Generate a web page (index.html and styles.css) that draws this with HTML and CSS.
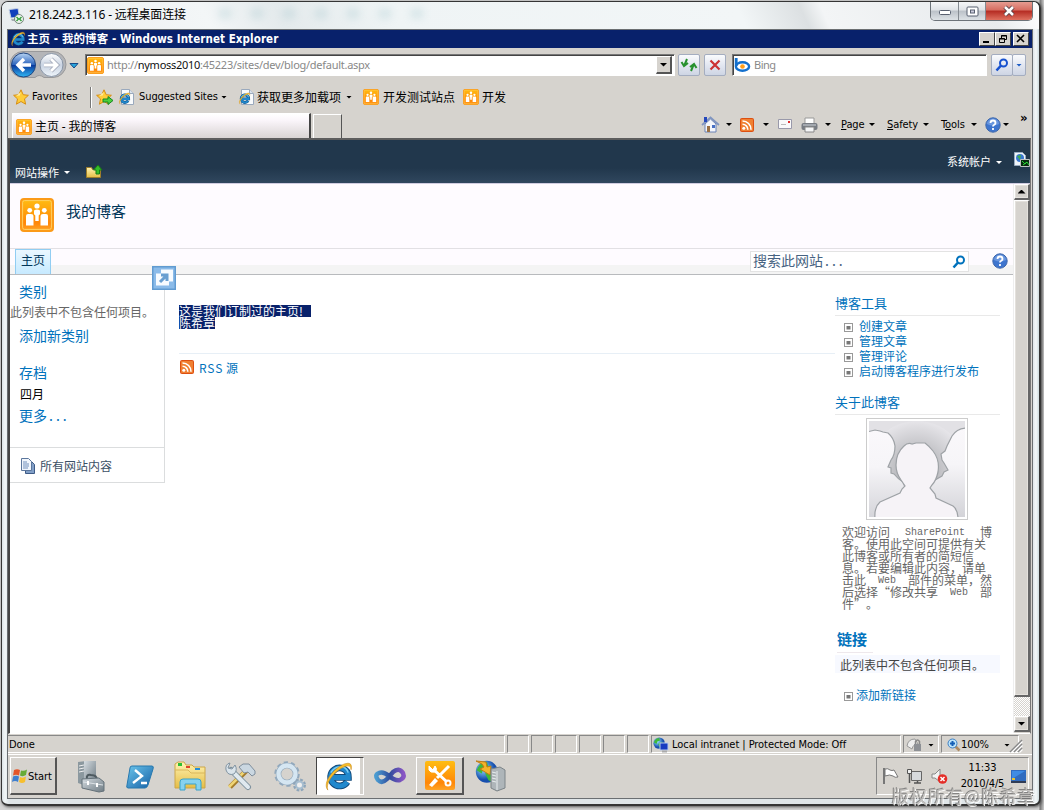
FILE: index.html
```html
<!DOCTYPE html>
<html lang="zh-CN">
<head>
<meta charset="utf-8">
<title>主页 - 我的博客</title>
<link rel="stylesheet" href="styles.css">
</head>
<body>
<svg class="defs" width="0" height="0">
  <defs>
    <linearGradient id="gOrange" x1="0" y1="0" x2="0" y2="1"><stop offset="0" stop-color="#ffbd12"/><stop offset=".75" stop-color="#ff8708"/><stop offset="1" stop-color="#ffa526"/></linearGradient>
    <linearGradient id="gBlue" x1="0" y1="0" x2="0" y2="1"><stop offset="0" stop-color="#b8d5f4"/><stop offset=".48" stop-color="#2f66bd"/><stop offset=".52" stop-color="#0a3a9e"/><stop offset="1" stop-color="#30b8f5"/></linearGradient>
    <linearGradient id="gSilver" x1="0" y1="0" x2="0" y2="1"><stop offset="0" stop-color="#fff"/><stop offset=".5" stop-color="#c9d3e2"/><stop offset="1" stop-color="#eff5fb"/></linearGradient>
    <linearGradient id="gFolder" x1="0" y1="0" x2="0" y2="1"><stop offset="0" stop-color="#fff3b4"/><stop offset="1" stop-color="#e5bd45"/></linearGradient>
    <linearGradient id="gPs" x1="0" y1="0" x2="1" y2="1"><stop offset="0" stop-color="#6cc6ec"/><stop offset="1" stop-color="#145fa5"/></linearGradient>
    <linearGradient id="gVs" x1="0" y1="0" x2="1" y2="0"><stop offset="0" stop-color="#4a9bd0"/><stop offset=".5" stop-color="#304c9d"/><stop offset="1" stop-color="#8a56c4"/></linearGradient>
    <linearGradient id="gSteel" x1="0" y1="0" x2="1" y2="1"><stop offset="0" stop-color="#d5dce1"/><stop offset="1" stop-color="#6e7b83"/></linearGradient>
    <radialGradient id="gPhoto"><stop offset="0" stop-color="#999ba0"/><stop offset=".5" stop-color="#c4c4c8"/><stop offset="1" stop-color="#e6e5e9"/></radialGradient>
    <linearGradient id="gSide" x1="0" y1="0" x2="0" y2="1"><stop offset="0" stop-color="#faf8fb"/><stop offset=".4" stop-color="#f6f5f8"/><stop offset="1" stop-color="#d2d2d7"/></linearGradient>
    <radialGradient id="gGlobe" cx=".35" cy=".35"><stop offset="0" stop-color="#9be6ff"/><stop offset="1" stop-color="#174fae"/></radialGradient>
    <symbol id="moss" viewBox="0 0 34 34"><rect x="1" y="1" width="32" height="32" rx="3" fill="url(#gOrange)" stroke="#fb9a18" stroke-width="2"/><rect x="2.600" y="2.600" width="28.800" height="28.800" rx="2" fill="none" stroke="#ffd063"/><g fill="#fff"><circle cx="17" cy="8" r="2.600"/><circle cx="9.700" cy="12.300" r="2.400"/><circle cx="24.300" cy="12.300" r="2.400"/><path d="M14 12.500q3-2 6 0v4q-1 0-1.300 1v5.500h-3.400v-5.500q-.3-1-1.300-1zM6 18q0-2 2-2h3q2.500 0 2.500 2v9.500H6zM20.500 18q0-2 2.500-2h3q2 0 2 2v9.500h-7.500z"/></g></symbol>
    <symbol id="ie" viewBox="0 0 32 32"><path d="M25 21.500a9.300 9.300 0 1 1 .6-9q.6 1.600.6 4.500H10.500" fill="none" stroke="#124878" stroke-width="7"/><path d="M25 21.500a9.300 9.300 0 1 1 .6-9q.6 1.600.6 4.500H10.500" fill="none" stroke="#2088cd" stroke-width="5"/><path d="M8 12q4-6 10-6t8 6" fill="none" stroke="#7fd0f5" stroke-width="1.500"/><path d="M5 30C-1 23 10 8 22 3q9-3 7 6 0-6-7-3C12 10 2 23 5 30z" fill="#f7bd28" stroke="#c8891a" stroke-width=".6"/></symbol>
    <symbol id="iepage" viewBox="0 0 16 16"><path d="M3.500.5h8l4 4v11h-12z" fill="#f9fbfd" stroke="#9aa9bd"/><path d="M11.500.5v4h4" fill="#dbe4ee" stroke="#9aa9bd"/><use href="#ie" x="0" y="3" width="13" height="13"/></symbol>
    <symbol id="star" viewBox="0 0 16 16"><path d="M8 .8l2.200 4.900 5.200.6-3.900 3.600 1.100 5.300L8 12.500l-4.600 2.700 1.100-5.300L.6 6.300l5.200-.6z" fill="#ffcd38" stroke="#d78e13"/><path d="M8 3L6.600 6.600 3 7z" fill="#fff0a0"/></symbol>
    <symbol id="rss" viewBox="0 0 14 14"><rect width="14" height="14" rx="2" fill="#dd4f10"/><rect x="1" y="1" width="12" height="12" rx="1" fill="#f08032"/><circle cx="3.800" cy="10.300" r="1.500" fill="#fff"/><path d="M2.500 6.200a5.300 5.300 0 0 1 5.300 5.500M2.500 3a8.500 8.500 0 0 1 8.500 8.700" fill="none" stroke="#fff" stroke-width="1.600"/></symbol>
    <symbol id="help" viewBox="0 0 16 16"><circle cx="8" cy="8" r="7.200" fill="#3e75ce" stroke="#3f68ab"/><path d="M2 7a6 5.500 0 0 1 12 0q-6 3-12 0z" fill="#87acea" opacity=".6"/><path d="M5.500 6q0-2.500 2.500-2.500T10.500 6q0 1-1.300 1.700Q8 8.300 8 9.500M8 11v2" fill="none" stroke="#fff" stroke-width="1.800"/></symbol>
    <symbol id="mag" viewBox="0 0 14 14"><circle cx="8.500" cy="5" r="3.500" fill="none" stroke="currentColor" stroke-width="2"/><path d="M6 7.500L1.500 12.500" stroke="currentColor" stroke-width="2.600"/></symbol>
    <symbol id="globe" viewBox="0 0 16 16"><circle cx="7" cy="7" r="6.500" fill="url(#gGlobe)"/><path d="M1 6q2-5 6-5l1 3-3 1-1 3zM6 8l4-2 3 2-3 5-2-1z" fill="#3eb93a"/></symbol>
    <symbol id="bullet" viewBox="0 0 9 9"><rect x=".5" y=".5" width="8" height="8" fill="#fff" stroke="#999"/><path d="M2.500 3h4v3.500h-4z" fill="#777"/></symbol>
  </defs>
</svg>

<div class="frame">
  <header class="rdp-title">
    <svg class="rdp-icon" width="16" height="16" viewBox="0 0 16 16"><path d="M1 1.500l9-1 1.500 8.500-8.500 1z" fill="#123fbd" stroke="#c6d1e2"/><path d="M3 11h7l1 2H4z" fill="#a7adb5"/><circle cx="11" cy="11" r="4.500" fill="#edf3ee" stroke="#76877c"/><path d="M8.500 9l2 2-2 2M13.500 9l-2 2 2 2" fill="none" stroke="#2d9b35" stroke-width="1.300"/></svg>
    <span class="rdp-name">218.242.3.116 - 远程桌面连接</span>
    <div class="blur-marks"><i></i><i></i><i></i><i></i><i></i><i></i><i></i></div>
    <div class="aero-buttons">
      <span class="ab min"><svg width="14" height="9" viewBox="0 0 14 9"><rect x="1.500" y="3.500" width="11" height="4" rx="1" fill="#fff" stroke="#596070"/></svg></span>
      <span class="ab max"><svg width="13" height="11" viewBox="0 0 13 11"><rect x="1" y="1" width="11" height="9" rx="1" fill="#fff" stroke="#596070"/><rect x="4.500" y="4" width="4" height="3" fill="#ccd" stroke="#596070"/></svg></span>
      <span class="ab close"><svg width="14" height="12" viewBox="0 0 14 12"><path d="M3 2l8 8M11 2l-8 8" stroke="#5a4248" stroke-width="4.500"/><path d="M3 2l8 8M11 2l-8 8" stroke="#fff" stroke-width="2.500"/></svg></span>
    </div>
  </header>

  <main class="desktop">
    <div class="ie-title">
      <svg width="16" height="16"><use href="#ie"/></svg>
      <b class="ie-name">主页 - 我的博客 - <span>Windows Internet Explorer</span></b>
      <div class="win-buttons">
        <span class="wb"><svg width="12" height="10"><path d="M2 8h6" stroke="#000" stroke-width="2"/></svg></span>
        <span class="wb"><svg width="12" height="10"><path d="M4.500 4V1.500h5v4H8M4 2h6M2.500 4.500h5v4h-5zM2 5h6" fill="none" stroke="#000"/></svg></span>
        <span class="wb last"><svg width="12" height="10"><path d="M2 1l7 7M9 1L2 8" stroke="#000" stroke-width="1.600"/></svg></span>
      </div>
    </div>

    <div class="nav-row">
      <svg class="backfwd" width="59" height="30" viewBox="0 0 59 30"><path d="M15 1.500h30a12.500 12.500 0 0 1 0 26H36q-5-4-9 0H15a12.500 12.500 0 0 1 0-26z" fill="#b4b5b8" stroke="#99999b"/><circle cx="15.500" cy="15" r="12" fill="url(#gBlue)" stroke="#204681"/><path d="M16 9l-6 6 6 6M10 15h13" fill="none" stroke="#fff" stroke-width="3.500"/><circle cx="43.500" cy="15" r="11.500" fill="url(#gSilver)" stroke="#8996a8"/><path d="M43 9l6 6-6 6M49 15H36" fill="none" stroke="#a4aaba" stroke-width="4.500"/><path d="M43 9l6 6-6 6M49 15H36" fill="none" stroke="#fff" stroke-width="2.800"/></svg>
      <svg class="hist" width="10" height="6"><path d="M1 .5h8L5 5z" fill="#27a4db" stroke="#164a88"/></svg>
      <div class="address"><svg width="17" height="17"><use href="#moss"/></svg><span class="url">http://<b>nymoss2010</b>:45223/sites/dev/blog/default.aspx</span><span class="drop"><i class="tri"></i></span></div>
      <span class="tb refresh"><svg width="18" height="16"><path d="M7 2L4.500 8M1.500 5l2.500 4 4-3M11 14l2.500-6M10 10l4-3 2.500 4" fill="none" stroke="#27912e" stroke-width="2"/></svg></span>
      <span class="tb stop"><svg width="12" height="12"><path d="M1.500 1.500l9 9M10.500 1.500l-9 9" stroke="#cc3033" stroke-width="2.200"/></svg></span>
      <div class="bing"><svg width="17" height="16" viewBox="0 0 17 16"><ellipse cx="8.500" cy="9.500" rx="6.600" ry="4.200" fill="#fff" stroke="#1470cd" stroke-width="2.400"/><path d="M2.200 1v8" stroke="#1470cd" stroke-width="2.800"/><circle cx="8.500" cy="9.500" r="2.300" fill="#ff9d19"/></svg><span>Bing</span></div>
      <span class="tb go"><svg class="gomag" width="14" height="14"><use href="#mag"/></svg></span><span class="tb go-drop"><i class="tri blue"></i></span>
    </div>

    <div class="fav-row">
      <svg class="fstar" width="16" height="16"><use href="#star"/></svg><span class="favs">Favorites</span><i class="fsep"></i>
      <svg class="addstar" width="18" height="17"><use href="#star" width="16" height="16"/><path d="M7 10h5V7.500l5 4-5 4V13H7z" fill="#4bd13c" stroke="#188624"/></svg>
      <svg class="ip1" width="16" height="16"><use href="#iepage"/></svg><span class="sugg">Suggested Sites</span><i class="tri t1"></i>
      <svg class="ip2" width="16" height="16"><use href="#iepage"/></svg><span class="addons">获取更多加载项</span><i class="tri t2"></i>
      <svg class="m1" width="16" height="16"><use href="#moss"/></svg><span class="dev1">开发测试站点</span>
      <svg class="m2" width="16" height="16"><use href="#moss"/></svg><span class="dev2">开发</span>
    </div>

    <div class="tab-row">
      <div class="tab"><svg width="16" height="16"><use href="#moss"/></svg><span>主页 - 我的博客</span></div><div class="newtab"></div>
      <div class="commands">
        <svg width="17" height="17" viewBox="0 0 17 17"><path d="M3 8v8h11V8L8.500 3z" fill="#f4f6fb" stroke="#6b83b6"/><path d="M0 9l8.500-7.500L17 9" fill="none" stroke="#8095c0" stroke-width="1.700"/><path d="M2 1h3v5H2z" fill="#2547bb"/><path d="M5 10h3v6H5z" fill="#9b7042"/><path d="M10 9h3v3h-3z" fill="#4870c4"/></svg><i class="tri c1"></i>
        <svg class="c2" width="14" height="14"><use href="#rss"/></svg><i class="tri c3"></i>
        <svg class="c4" width="15" height="11"><path d="M.5.5h13v9H.5z" fill="#f9f9fa" stroke="#99a"/><path d="M10 2h2v2h-2z" fill="#e02b2b"/><path d="M3 5.500h5" stroke="#bbb"/></svg>
        <svg class="c5" width="17" height="16"><path d="M4 1h9v7H4z" fill="#fff" stroke="#999"/><rect x=".5" y="6" width="16" height="7" rx="2" fill="#777c83"/><path d="M2 8h13" stroke="#d1d5db"/><path d="M4 10h9v5H4z" fill="#f5f6f7" stroke="#888"/></svg><i class="tri c6"></i>
        <span class="page-cmd"><u>P</u>age</span><i class="tri c7"></i><span class="safe-cmd"><u>S</u>afety</span><i class="tri c8"></i><span class="tool-cmd">T<u>o</u>ols</span><i class="tri c9"></i>
        <svg class="c10" width="16" height="16"><use href="#help"/></svg><i class="tri c11"></i><span class="more">»</span>
      </div>
    </div>

    <div class="viewport">
      <div class="ribbon">
        <span class="actions">网站操作</span><i class="tri white"></i>
        <svg class="folder" width="17" height="15"><path d="M.5 13.500v-10h5l1 2h8v8z" fill="url(#gFolder)" stroke="#9c7d2b"/><path d="M10 10V6H7.500L12 1l4 5h-2.500v4z" fill="#35bd29" stroke="#197816"/></svg>
        <span class="account">系统帐户</span><i class="tri white acc-t"></i>
        <svg class="conn" width="17" height="17"><path d="M.5.5h8l3 3v10H.5z" fill="#eef3f8" stroke="#99abc0"/><circle cx="6" cy="6" r="4" fill="#3977cf"/><path d="M3 4l4-1-1 5z" fill="#40ad4b"/><path d="M6.500 7.500h9v7h-9z" fill="#082b11" stroke="#c0c3c4"/><path d="M8 9l3 3 2-2 2 3M9 13l4-3" fill="none" stroke="#28d533"/></svg>
      </div>
      <div class="scroll-area">
        <div class="page">
          <div class="site-head"><svg width="34" height="34"><use href="#moss"/></svg><h1>我的博客</h1></div>
          <div class="topnav"><span class="home">主页</span>
            <div class="site-search"><span>搜索此网站<span class="dots">...</span></span><svg width="14" height="14"><use href="#mag"/></svg></div>
            <svg class="sp-help" width="16" height="16"><use href="#help"/></svg>
          </div>
          <div class="columns">
            <aside class="left">
              <div class="quick">
                <a class="cat">类别</a><p class="empty">此列表中不包含任何项目。</p><a class="addcat">添加新类别</a>
                <a class="archive">存档</a><span class="april">四月</span><a class="morelink">更多<span class="dots">...</span></a>
              </div>
              <div class="all"><svg width="15" height="16"><path d="M4.500 3.500h6l3 3v9h-9z" fill="#819fc7" stroke="#3e5b87"/><path d="M.5.5h7l3 3v9H.5z" fill="#f0f5fc" stroke="#5c779d"/><path d="M2 4h4M2 6h6M2 8h6M2 10h5" stroke="#718fbb"/></svg><span>所有网站内容</span></div>
              <svg class="popout" width="24" height="24"><rect x=".75" y=".75" width="22.500" height="22.500" fill="#8bbbe9" stroke="#619bd1" stroke-width="1.500"/><path d="M9 3.500h12v12h-4v4H4v-12h5z" fill="#f7fbff"/><path d="M8 16l6-6M9 9h6v6" fill="none" stroke="#699fd1" stroke-width="3"/></svg>
            </aside>
            <section class="middle">
              <p class="selected"><mark>这是我们订制过的主页!</mark><br><mark>陈希章</mark></p>
              <div class="rss-line"><svg width="14" height="14"><use href="#rss"/></svg><a><span>RSS</span> 源</a></div>
            </section>
            <aside class="right">
              <h2>博客工具</h2>
              <ul><li><svg width="9" height="9"><use href="#bullet"/></svg><span>创建文章</span></li><li><svg width="9" height="9"><use href="#bullet"/></svg><span>管理文章</span></li><li><svg width="9" height="9"><use href="#bullet"/></svg><span>管理评论</span></li><li><svg width="9" height="9"><use href="#bullet"/></svg><span>启动博客程序进行发布</span></li></ul>
              <h2 class="about">关于此博客</h2>
              <div class="photo"><svg width="96" height="96" viewBox="0 0 96 96"><rect width="96" height="96" fill="#e2e1e5"/><circle cx="48" cy="50" r="50" fill="url(#gPhoto)"/><g stroke="#9ea2a6" stroke-width="1.200"><path d="M-2 11l8-2 5 1 3 1 5 1q6 5 7 13 0 9-4 14l-3 7 3 1v5l3 1q4 5 9 8l2 5v35H-2z" fill="url(#gSide)"/><path d="M98 7q-10 0-15 8l-5 10-2 5-4 3 1 6 2 3 4 7-4 2-2 4-7 4-5 6v33h37z" fill="url(#gSide)"/><path d="M6 98q-1-12 5-17l20-9 2-4 3-3-4-6q-5-7-5-15 0-12 8-19 4-4 8-2l4-1h9q4 3 8 8 7 9 5 21-2 9-6 13l-2 3 5 6 1 4 17 8q5 4 5 13z" fill="#f6f3f7"/></g></svg></div>
              <div class="intro"><p class="j"><span>欢迎访问</span><tt>SharePoint</tt><span>博</span></p><p>客。使用此空间可提供有关</p><p>此博客或所有者的简短信</p><p>息。若要编辑此内容，请单</p><p class="j"><span>击此</span><tt>Web</tt><span>部件的菜单，然</span></p><p class="j"><span>后选择<q>“</q>修改共享</span><tt>Web</tt><span>部</span></p><p>件<q>”</q>。</p></div>
              <h3>链接</h3>
              <div class="nolinks">此列表中不包含任何项目。</div>
              <div class="addlink"><svg width="9" height="9"><use href="#bullet"/></svg><a>添加新链接</a></div>
            </aside>
          </div>
        </div>
        <div class="scrollbar"><span class="sb-btn"><i class="tri up"></i></span><span class="thumb"></span><span class="track"></span><span class="sb-btn"><i class="tri"></i></span></div>
      </div>
    </div>

    <div class="status"><span class="done">Done</span><i></i><i></i><i></i><i></i><i></i><i></i>
      <span class="zone"><svg width="17" height="16"><use href="#globe" width="14" height="14"/><path d="M7 6h8v7H7z" fill="#173ac0" stroke="#b7c9ea"/><path d="M9 14.500h5" stroke="#aaa" stroke-width="2"/></svg><em>Local intranet | Protected Mode: Off</em></span>
      <span class="lock"><svg width="18" height="16"><path d="M1 9q1-7 8-7l3 5q-5 0-6 5z" fill="#eee" stroke="#999"/><rect x="8" y="7" width="7" height="7" fill="#8d9095"/><path d="M9.500 7V4.500q2-3 4 0V7" fill="none" stroke="#888" stroke-width="1.500"/></svg><i class="tri"></i></span>
      <span class="zoom"><svg width="14" height="14"><path d="M8 8l4.500 4.500" stroke="#ae8b62" stroke-width="2.600"/><circle cx="5.500" cy="5.500" r="4.500" fill="#bce4fa" stroke="#3e7fc4"/><path d="M3 5.500h5M5.500 3v5" stroke="#135eb5" stroke-width="2"/></svg><em>100%</em><i class="tri"></i></span>
      <svg class="grip" width="14" height="14"><path d="M2 13L13 2M6 13l7-7M10 13l3-3" stroke="#fff" stroke-width="2.500"/><path d="M1 13L13 1M5 13l8-8M9 13l4-4" stroke="#888" stroke-width="1.500"/></svg>
    </div>

    <div class="taskbar">
      <div class="start"><svg width="16" height="16" viewBox="0 0 16 16"><path d="M2 2q3-1.500 6 0L7 7.500Q4 6 1 7.500z" fill="#e4562a"/><path d="M9 2.500q3 1 6-1L14 7q-3 2-6 .5z" fill="#67ab36"/><path d="M1 8.500q3-1.500 6 0L6 14q-3-2-6 0z" fill="#3e7fcf"/><path d="M8 9q3 1.500 6-.5L13 14q-3 2-6 0z" fill="#f7bf2e"/></svg><span>Start</span></div>
      <div class="tasks">
        <span class="task"><svg width="30" height="32" viewBox="0 0 30 32"><path d="M3 2l8-1v25l-8-3z" fill="#8b989f"/><path d="M9 1h12v22H9z" fill="url(#gSteel)"/><path d="M4 6l5-1M4 9l5-1M4 12l5-1" stroke="#eee"/><path d="M12 19q-1-5 4-4 6 0 6 5" fill="none" stroke="#4e5a60" stroke-width="2"/><path d="M7 19l17-1 5 4v9l-5 1-17-4z" fill="url(#gSteel)" stroke="#65727a"/><path d="M8 22l20 3" stroke="#dbe1e5"/><path d="M13 21v4M22 23v4" stroke="#fff" stroke-width="2"/></svg></span>
        <span class="task"><svg width="28" height="25" viewBox="0 0 28 25"><path d="M6 2h20q2 0 1 3l-5 16q-1 3-3 3H2q-2 0-1-3L4 4q0-2 2-2z" fill="url(#gPs)" stroke="#2778ae"/><path d="M9 6l7 6-9 7M15 19h6" fill="none" stroke="#fff" stroke-width="2.400"/></svg></span>
        <span class="task"><svg width="34" height="30" viewBox="0 0 34 30"><path d="M2 27V3l3-2h6l2 3h6l2 2h11v21z" fill="url(#gFolder)" stroke="#cda648"/><path d="M5 2h4v3H5z" fill="#2bbd35"/><path d="M13 5h4v2h-4z" fill="#e1432d"/><path d="M22 7h5v2h-5z" fill="#258ed8"/><path d="M2 9h13l3 3h14" stroke="#d9b65a" fill="none"/><path d="M7 29v-8q0-3 3-3h15q3 0 3 3v8h-5v-6H12v6z" fill="#86d2ef" stroke="#3ba3ca"/></svg></span>
        <span class="task"><svg width="32" height="28" viewBox="0 0 32 28"><path d="M6 25L23 8" stroke="#a57c2a" stroke-width="5"/><path d="M5 25L21 9" stroke="#efd474" stroke-width="2.500"/><path d="M15 5l4-3h6l6 7v3l-3 2-4-4-4 1z" fill="#cad7e1" stroke="#7e8d9c"/><path d="M7 8l17 17" stroke="#7f929f" stroke-width="6" stroke-linecap="round"/><path d="M7 8l17 17" stroke="#e0e9ef" stroke-width="4" stroke-linecap="round"/><path d="M2 8q2 6 8 4 4-4 1-9l-3 4-4-1 2-5q-5 1-4 7z" fill="#dae4eb" stroke="#8193a1"/></svg></span>
        <span class="task"><svg width="34" height="32" viewBox="0 0 34 32"><circle cx="14" cy="14" r="10.500" fill="none" stroke="#92a9bd" stroke-width="4.500" stroke-dasharray="3.800 2.800"/><circle cx="14" cy="14" r="8.500" fill="none" stroke="#92a9bd" stroke-width="5.500"/><circle cx="14" cy="14" r="8.500" fill="none" stroke="#d5e6f2" stroke-width="4.300"/><circle cx="26.500" cy="25" r="5" fill="none" stroke="#8ea5b9" stroke-width="3" stroke-dasharray="2.500 1.430"/><circle cx="26.500" cy="25" r="3.500" fill="#eee" stroke="#a7bed0" stroke-width="2"/></svg></span>
        <span class="task active"><svg width="31" height="31"><use href="#ie"/></svg></span>
        <span class="task"><svg width="32" height="18" viewBox="0 0 32 18"><path d="M13 12q-5 5-9 1-4-5 1-7 4-2 10 3t11 4q5-2 3-7-4-6-10-1l-6 7" fill="none" stroke="url(#gVs)" stroke-width="4.500"/></svg></span>
        <span class="task raised"><svg width="30" height="29" viewBox="0 0 30 29"><rect width="30" height="29" rx="2" fill="url(#gOrange)"/><path d="M8 8l14 13M24 5L12 17" stroke="#fff" stroke-width="3"/><path d="M4 5l4 4 2-4q3 3 0 6-5 1-6-2z" fill="#fff" stroke="#fff"/><circle cx="23" cy="22" r="2.500" fill="none" stroke="#fff" stroke-width="2"/><path d="M10 17l3 3-6 6-3-2z" fill="#fff"/></svg></span>
        <span class="task"><svg width="31" height="32" viewBox="0 0 31 32"><use href="#globe" width="27" height="27"/><path d="M1 1l10 1 1 5 4-1-1 9-10-6 4-2-2-3z" fill="#f5b42a" stroke="#bf7c16"/><path d="M16 9l9-2 5 3v18l-8 3-6-3z" fill="#aeb5b9" stroke="#7c8488"/><path d="M22 11v19M17 12l4 1M17 15l4 1M17 18l4 1M17 21l4 1" stroke="#e9eeef"/></svg></span>
      </div>
      <div class="tray">
        <svg width="17" height="18"><path d="M2 17V1" stroke="#777" stroke-width="2"/><path d="M3 2q3-1 5 1 2 1 4 0l4 7q-3 1-5-1-3-2-8 0z" fill="#fff" stroke="#777"/></svg>
        <svg class="net" width="17" height="17"><path d="M5.500 3.500h10v9h-10z" fill="#d7dadd" stroke="#666"/><path d="M1.500 1.500h4v4h-4z" fill="#eee" stroke="#555"/><path d="M3.500 6v9M8 15h7M11.500 13v2" fill="none" stroke="#555" stroke-width="1.500"/></svg>
        <svg class="vol" width="17" height="17"><path d="M1 6h3l5-5v13L4 10H1z" fill="#f2f2f2" stroke="#888"/><circle cx="11.500" cy="11" r="4.800" fill="#e42d27"/><path d="M9.500 9l4 4M13.500 9l-4 4" stroke="#fff" stroke-width="1.500"/></svg>
        <div class="clock">11:33<br>2010/4/5</div>
        <svg class="showdesk" width="15" height="13"><path d="M0 0h15v12H0z" fill="#316cbf"/><path d="M1 1h13L1 9z" fill="#3f8ce4"/><path d="M1 8h3v2H1z" fill="#e9c331"/><path d="M0 12h15" stroke="#303c55" stroke-width="2"/></svg>
      </div>
    </div>
  </main>
</div>
<div class="watermark">版权所有@陈希章</div>
</body>
</html>
```
FILE: styles.css
```css
* { box-sizing: border-box; }
html, body { margin: 0; width: 1044px; height: 810px; overflow: hidden; }
body { position: relative; padding: 1px 4px 4px 1px; background: linear-gradient(90deg, #d4d4d4 0, #d4d4d4 1039px, #777 1040px, #ccc); font: 11px/14px "DejaVu Sans Condensed", "Noto Sans CJK SC", sans-serif; color: #000; }
svg { display: block; flex: none; overflow: visible; }
.defs { position: absolute; }
p, h1, h2, h3, ul { margin: 0; padding: 0; font-weight: normal; }
i, em { font-style: normal; flex: none; }
span { flex: none; white-space: nowrap; }
a { color: #0072bc; white-space: nowrap; }

.frame { width: 1040px; height: 805px; border: 2px solid #353535; border-width: 1px 2px 2px 1px; border-radius: 7px; background: linear-gradient(90deg, #dce3e6, #f1f6f7 3px, #dfe5e8 7px 1031px, #f4f8f9 1034px, #cfdcdf); padding: 0 6px 6px 5px; box-shadow: 1px 1px 3px #555; }
.rdp-title { height: 27px; display: flex; margin: 0 -6px 0 -5px; padding-left: 6px; border-radius: 6px 6px 0 0; background: linear-gradient(65deg, #e9edef, #f3f6f7 20%, #e4eaec 27%, #eff4f5 38%, #f2f6f7 71%, #dce0e2 77%, #f3f5f6 79%, #e8ebed 95%, #fff); }
.rdp-icon { margin-top: 6px; }
.rdp-name { margin: 5px 0 0 5px; width: 164px; font: 12px/16px "Noto Sans", "Noto Sans CJK SC", sans-serif; letter-spacing: -.16px; }
.blur-marks { display: flex; gap: 20px; margin: 7px 0 0 26px; width: 706px; filter: blur(4px); opacity: .25; }
.blur-marks i { width: 12px; height: 9px; background: #7fb0b9; }
.aero-buttons { display: flex; margin-left: 5px; height: 19px; border: 1px solid #6d7379; border-top: 0; border-radius: 0 0 5px 5px; overflow: hidden; }
.ab { width: 27px; height: 18px; display: flex; align-items: center; justify-content: center; border-right: 1px solid #858b92; background: linear-gradient(#f6f7f8, #dfe2e6 45%, #bbc1c8 50%, #dde2e6); }
.ab.min { width: 28px; }
.ab.close { width: 46px; border: 0; background: linear-gradient(#e69c91, #d66c60 45%, #b52b22 50%, #de7160); }

.desktop { width: 1025px; height: 770px; margin-left: 1px; border: 1px solid #6b6f72; border-width: 1px 1px 1px 0; background: #d6d3ce; display: flex; flex-direction: column; box-shadow: -1px 0 #696d70; }
.ie-title { height: 18px; flex: none; background: #08216b; display: flex; padding: 1px 3px 0 2px; }
.ie-name { color: #fff; margin: 0 0 0 1px; width: 953px; font: bold 11.500px/17px "DejaVu Sans Condensed", "Noto Sans CJK SC", sans-serif; letter-spacing: .08px; white-space: nowrap; }
.win-buttons { display: flex; padding-top: 1px; }
.wb { width: 16px; height: 14px; padding: 1px; background: #d6d3ce; border: 1px solid #fff; border-right-color: #444; border-bottom-color: #444; }
.wb.last { margin-left: 2px; }

.nav-row { height: 35px; flex: none; display: flex; padding-top: 2px; }
.hist { margin: 13px 0 0 2px; }
.address, .bing { height: 22px; margin-top: 4px; background: #fff; border: 1px solid #777; border-right-color: #fff; border-bottom-color: #fff; box-shadow: inset 1px 1px #444; display: flex; align-items: center; font: 11px/14px "Noto Sans", sans-serif; color: #888; }
.address { width: 590px; margin-left: 6px; padding-left: 1px; }
.url { margin-left: 3px; width: 549px; letter-spacing: -.27px; }
.url b { font-weight: 400; color: #111; }
.drop { width: 16px; height: 18px; display: flex; align-items: center; justify-content: center; background: #d6d3ce; border: 1px solid #fff; border-right: 2px solid #555; border-bottom: 2px solid #555; }
.tri { display: block; width: 6px; height: 3px; background: #000; clip-path: polygon(0 0, 100% 0, 50% 100%); }
.drop .tri { width: 8px; height: 4px; }
.tri.blue { background: #1b5bc5; }
.tri.white { background: #fff; }
.tri.up { clip-path: polygon(50% 0, 100% 100%, 0 100%); }
.tb { height: 22px; margin-top: 4px; display: flex; align-items: center; justify-content: center; border: 1px solid #a4adc0; border-radius: 2px; background: linear-gradient(#fafbfd, #e3e7f1 50%, #ced5e4); }
.refresh { width: 22px; margin-left: 3px; }
.stop { width: 22px; margin-left: 4px; }
.bing { width: 255px; margin-left: 6px; padding-left: 1px; }
.bing span { margin-left: 3px; letter-spacing: -.5px; }
.go { width: 22px; margin-left: 4px; color: #1852cf; }
.go-drop { width: 14px; margin-left: -1px; }

.fav-row { height: 27px; flex: none; display: flex; align-items: center; padding: 1px 0 0 5px; }
.favs { width: 59px; margin-left: 3px; letter-spacing: .1px; }
.commands, .status, .taskbar { letter-spacing: -.1px; }
.fsep { width: 2px; height: 21px; background: #777; border-right: 1px solid #fff; margin-left: -1px; }
.addstar { margin-left: 4px; }
.ip1 { margin-left: 4px; }
.sugg { margin-left: 5px; width: 82px; letter-spacing: -.08px; }
.ip2 { margin-left: 11px; }
.addons, .dev1, .dev2 { font: 12px/16px "Noto Sans CJK SC", sans-serif; }
.addons { margin-left: 3px; width: 89px; }
.m1 { margin-left: 11px; }
.dev1 { margin-left: 4px; width: 80px; }
.dev2 { margin-left: 3px; }

.tab-row { height: 28px; flex: none; display: flex; padding-left: 4px; }
.tab { width: 299px; height: 25px; margin-top: 3px; display: flex; align-items: center; padding-left: 3px; border: 1px solid #fff; border-right: 2px solid #444; border-bottom: 0; background: linear-gradient(#fff, #fbf6fb 25%, #d9d4d3); }
.tab svg { margin-top: 1px; }
.tab span { margin: 1px 0 0 3px; font: 12px/16px "Noto Sans", "Noto Sans CJK SC", sans-serif; letter-spacing: -.1px; }
.newtab { width: 29px; height: 24px; margin: 4px 0 0 2px; border: 1px solid #fff; border-right-color: #555; border-bottom: 0; }
.commands { display: flex; align-items: center; margin: 2px 0 0 360px; height: 25px; }
.c1 { margin-left: 7px; }
.c2 { margin-left: 8px; }
.c3 { margin-left: 9px; }
.c4 { margin-left: 9px; }
.c5 { margin-left: 8px; }
.c6 { margin-left: 7px; }
.page-cmd { margin-left: 10px; width: 28px; }
.safe-cmd { margin-left: 12px; width: 36px; }
.tool-cmd { margin-left: 12px; width: 30px; }
.c10 { margin-left: 8px; }
.c11 { margin-left: 2px; }
.more { margin: -13px 0 0 11px; font-weight: bold; font-size: 13px; }

.viewport { height: 596px; flex: none; border: 2px solid #454545; border-bottom: 1px solid #fff; border-top-color: #5d5d5d; border-right: 1px solid #777; margin: 0 1px 0 0; background: #fff; }
.ribbon { height: 44px; background: linear-gradient(#21374c 65%, #30475e); border-bottom: 1px solid #d0cce0; color: #fff; display: flex; padding-left: 5px; font: 11px/14px "Noto Sans CJK SC", sans-serif; }
.actions { margin-top: 25px; width: 49px; }
.ribbon .tri { margin-top: 31px; }
.folder { margin: 24px 0 0 16px; }
.account { margin: 14px 0 0 844px; width: 48px; }
.ribbon .acc-t { margin-top: 21px; margin-left: 1px; }
.conn { margin: 12px 0 0 12px; }
.scroll-area { height: 549px; display: flex; }
.page { width: 1004px; }
.site-head { height: 65px; background: #fefbff; display: flex; padding: 14px 10px; border-bottom: 1px solid #e2e0e4; }
h1 { font: 15px/22px "Noto Sans CJK SC", sans-serif; color: #003559; margin: 2px 0 0 12px; }
.topnav { height: 26px; display: flex; background: linear-gradient(#fefbff 16px, #f4f4f4 16px); border-bottom: 1px solid #b8babd; padding-left: 5px; }
.home { width: 36px; height: 25px; text-align: center; border: 1px solid #91cdf2; border-bottom: 0; background: linear-gradient(#eaf7ff, #c6eaff); font: 12px/20px "Noto Sans CJK SC", sans-serif; color: #003559; }
.site-search { width: 219px; height: 21px; margin: 2px 0 0 699px; padding: 0 2px; border: 1px solid #e3e3e3; background: #fff; display: flex; align-items: center; justify-content: space-between; color: #0072bc; }
.site-search > span { font: 14px/18px "Noto Sans CJK SC", sans-serif; color: #476382; margin-top: -3px; }
.sp-help { margin: 4px 0 0 23px; }
.columns { display: flex; height: 458px; }
.left { position: relative; width: 155px; height: 208px; border: 1px solid #dbddde; border-width: 0 1px 1px 0; }
.popout { position: absolute; left: 142px; top: -9px; }
.quick { height: 173px; display: flex; flex-direction: column; border-bottom: 1px solid #dbddde; padding: 6px 0 0 9px; font: 14px/20px "Noto Sans CJK SC", sans-serif; }
.empty { margin: 1px 0 0 -9px; font-size: 12px; color: #666; white-space: nowrap; }
.addcat { margin-top: 3px; }
.archive { margin-top: 17px; }
.april { font-size: 12px; margin: 2px 0 0 1px; }
.morelink { margin-top: 1px; }
.dots { letter-spacing: 3px; margin-left: 2px; }
.all { height: 34px; display: flex; align-items: center; padding: 2px 0 0 11px; gap: 4px; color: #3b4f65; font: 12px/16px "Noto Sans CJK SC", sans-serif; }
.middle { width: 656px; margin-left: 14px; padding-top: 30px; }
.selected { height: 49px; border-bottom: 1px solid #e7eff6; font: 12px/12px "Noto Sans CJK SC", sans-serif; }
mark { display: inline-block; height: 12px; background: #08216b; color: #fff; }
mark:first-child { width: 132px; }
.rss-line { display: flex; padding: 6px 0 0 1px; gap: 5px; font: 12px/16px "Noto Sans CJK SC", sans-serif; }
.rss-line span { letter-spacing: .9px; }
.right { width: 165px; padding-top: 19px; font: 12px/15px "Noto Sans CJK SC", sans-serif; color: #666; }
h2 { height: 22px; border-bottom: 1px solid #e9e9e9; font-size: 13px; line-height: 17px; color: #0072bc; }
ul { list-style: none; margin-top: 3px; color: #0072bc; }
li { height: 15px; display: flex; align-items: center; padding-left: 9px; gap: 6px; }
li span { margin-top: -3px; }
li svg { margin-top: 1px; }
.about { margin-top: 14px; }
.photo { width: 102px; height: 102px; border: 1px solid #ccc; padding: 2px; margin: 3px 0 0 31px; }
.photo svg { overflow: hidden; }
.intro { margin: 6px 0 0 7px; width: 150px; line-height: 12px; }
.intro p { height: 12px; white-space: nowrap; }
.intro .j { display: flex; justify-content: space-between; }
tt { font: 10px/14px "Liberation Mono", monospace; }
q { quotes: none; display: inline-block; width: 12px; text-align: center; }
h3 { margin: 21px 0 0 2px; width: 36px; height: 22px; font: bold 15px/16px "Noto Sans CJK SC", sans-serif; color: #0072bc; border-bottom: 1px solid #eee8ec; white-space: nowrap; }
.nolinks { margin-top: 2px; height: 18px; background: #f7f9ff; color: #444; padding-left: 5px; line-height: 19px; }
.addlink { display: flex; align-items: center; margin: 14px 0 0 9px; gap: 3px; }
.addlink svg { margin-top: 3px; }
.scrollbar { width: 17px; display: flex; flex-direction: column; border-left: 1px solid #eee; background: #d6d3ce; }
.sb-btn, .thumb { background: #d6d3ce; border: 1px solid #fff; border-right: 2px solid #666; border-bottom: 2px solid #666; box-shadow: inset 0 0 0 1px #e4e1dc; }
.sb-btn { height: 16px; display: flex; align-items: center; justify-content: center; }
.sb-btn .tri { width: 8px; height: 4px; }
.thumb { height: 497px; }
.track { height: 19px; flex: none; background: repeating-conic-gradient(#fff 0 25%, #d6d3ce 0 50%) 0 0 / 2px 2px; }

.status { height: 21px; flex: none; display: flex; align-items: flex-start; padding-top: 1px; border-bottom: 1px solid #fff; }
.status > span, .status > i { height: 18px; border: 1px solid #888; border-right-color: #fff; border-bottom-color: #fff; margin-right: 2px; }
.status > i { width: 22px; }
.status > span { display: flex; align-items: center; padding-top: 2px; }
.done { width: 497px; border-left: 0 !important; padding-left: 1px; }
.zone { width: 250px; padding-left: 1px; letter-spacing: -.06px; }
.zone em { margin-left: 2px; }
.lock { width: 36px; padding-left: 2px; }
.lock .tri { margin-left: 4px; }
.zoom { width: 78px; padding-left: 5px; }
.zoom em { width: 43px; margin-left: 0; }
.grip { margin: 4px 0 0 -12px; }

.taskbar { height: 43px; flex: none; display: flex; padding: 2px 0 0 2px; }
.start { width: 47px; height: 38px; display: flex; align-items: center; padding-left: 1px; gap: 0; border: 1px solid #fff; border-right: 2px solid #555; border-bottom: 2px solid #555; }
.start span { padding-top: 2px; }
.tasks { display: flex; padding-left: 9px; height: 38px; gap: 2px; }
.task { width: 48px; display: flex; align-items: center; justify-content: center; }
.active { background: linear-gradient(90deg, #fff 43px, #d6d3ce 43px); border: 1px solid #444; border-right-color: #fff; border-bottom-color: #fff; padding-right: 3px; }
.raised { border: 1px solid #fff; border-right: 2px solid #555; border-bottom: 2px solid #555; }
.tray { width: 153px; height: 38px; margin-left: 362px; padding-left: 5px; display: flex; align-items: center; border: 1px solid #888; border-right-color: #fff; border-bottom-color: #fff; }
.net { margin-left: 7px; }
.vol { margin-left: 8px; }
.clock { width: 49px; margin-left: 10px; text-align: center; line-height: 16px; white-space: nowrap; }
.showdesk { margin-left: 4px; }
.watermark { position: absolute; left: 892px; top: 786px; font: 17px/20px "Noto Sans CJK SC", sans-serif; letter-spacing: 1.1px; white-space: nowrap; color: #bdbbb8; text-shadow: -1px -1px #777, 1px 1px #fff; opacity: .85; }
```
